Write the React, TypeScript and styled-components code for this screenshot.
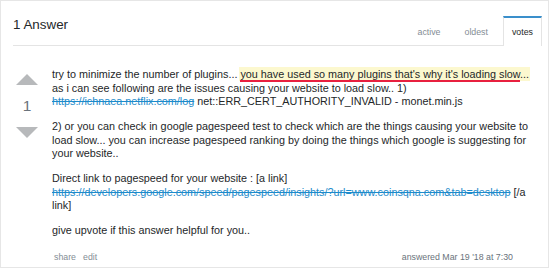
import styled, { createGlobalStyle } from "styled-components";

const GlobalStyle = createGlobalStyle`
  body {
    margin: 0;
    background: #ffffff;
    font-family: "Liberation Sans", Arial, sans-serif;
  }
`;

const Frame = styled.div`
  width: 549px;
  height: 268px;
  box-sizing: border-box;
  border: 1px solid #e6e6e6;
  background: #ffffff;
  overflow: hidden;
`;

const Header = styled.div`
  display: flex;
  justify-content: space-between;
  align-items: flex-end;
  height: 44px;
  margin: 0 6px 0 12px;
  border-bottom: 1px solid #e4e4e4;
`;

const Title = styled.h2`
  align-self: center;
  margin: 0;
  padding-top: 2px;
  font-size: 13.4px;
  font-weight: normal;
  color: #242729;
`;

const Tabs = styled.div`
  display: flex;
  align-items: flex-end;
  gap: 6px;
`;

const Tab = styled.div<{ $selected?: boolean }>`
  display: flex;
  align-items: center;
  box-sizing: border-box;
  height: ${(p) => (p.$selected ? "30px" : "29px")};
  padding: 0 8px;
  margin-bottom: ${(p) => (p.$selected ? "-1px" : "0")};
  font-size: 8.8px;
  color: ${(p) => (p.$selected ? "#242729" : "#848d95")};
  background: #ffffff;
  border: 1px solid ${(p) => (p.$selected ? "#e4e4e4" : "transparent")};
  border-top: 2px solid ${(p) => (p.$selected ? "#3a8fcb" : "transparent")};
  border-bottom: none;
`;

const Body = styled.div`
  display: flex;
  padding: 22px 7px 0 15px;
`;

const VoteColumn = styled.div`
  display: flex;
  flex-direction: column;
  align-items: center;
  width: 22px;
  margin-right: 14px;
  padding-top: 6px;
`;

const Arrow = styled.div<{ $down?: boolean }>`
  width: 0;
  height: 0;
  border-left: 11px solid transparent;
  border-right: 11px solid transparent;
  ${(p) =>
    p.$down
      ? "border-top: 11px solid #b7b9bb;"
      : "border-bottom: 11px solid #b7b9bb;"}
`;

const VoteCount = styled.div`
  margin: 11px 0;
  font-size: 15.5px;
  line-height: 20px;
  color: #6a737c;
`;

const Post = styled.div`
  flex: 1;
  font-size: 10.8px;
  line-height: 13.5px;
  color: #242729;

  p {
    margin: 0 0 11.5px;
  }

  p:last-of-type {
    margin-bottom: 0;
  }
`;

const Highlight = styled.span`
  background: #fcf8cf;
  padding: 1px 1px 1px 1px;
  margin-left: -1px;
`;

const Underlined = styled.span`
  border-bottom: 2px solid #e8203f;
`;

const Link = styled.a`
  color: #1d8bcb;
  text-decoration: line-through;
`;

const Footer = styled.div`
  display: flex;
  justify-content: space-between;
  align-items: center;
  margin-top: 13px;
  padding: 0 28px 0 2px;
  font-size: 8.8px;
  line-height: 12px;
`;

const Actions = styled.div`
  display: flex;
  gap: 7px;
  color: #848d95;
`;

const Answered = styled.div`
  color: #6a737c;
`;

export default function App() {
  return (
    <>
      <GlobalStyle />
      <Frame>
        <Header>
          <Title>1 Answer</Title>
          <Tabs>
            <Tab>active</Tab>
            <Tab>oldest</Tab>
            <Tab $selected>votes</Tab>
          </Tabs>
        </Header>
        <Body>
          <VoteColumn>
            <Arrow />
            <VoteCount>1</VoteCount>
            <Arrow $down />
          </VoteColumn>
          <Post>
            <p>
              try to minimize the number of plugins...{" "}
              <Highlight>
                <Underlined>
                  you have used so many plugins that's why it's loading slow
                </Underlined>
                ...
              </Highlight>{" "}
              as i can see following are the issues causing your website to load slow.. 1){" "}
              <Link>https://ichnaea.netflix.com/log</Link> net::ERR_CERT_AUTHORITY_INVALID -
              monet.min.js
            </p>
            <p>
              2) or you can check in google pagespeed test to check which are the things
              causing your website to load slow... you can increase pagespeed ranking by doing
              the things which google is suggesting for your website..
            </p>
            <p>
              Direct link to pagespeed for your website : [a link]{" "}
              <Link>
                https://developers.google.com/speed/pagespeed/insights/?url=www.coinsqna.com&amp;tab=desktop
              </Link>{" "}
              [/a link]
            </p>
            <p>give upvote if this answer helpful for you..</p>
            <Footer>
              <Actions>
                <span>share</span>
                <span>edit</span>
              </Actions>
              <Answered>answered Mar 19 '18 at 7:30</Answered>
            </Footer>
          </Post>
        </Body>
      </Frame>
    </>
  );
}
